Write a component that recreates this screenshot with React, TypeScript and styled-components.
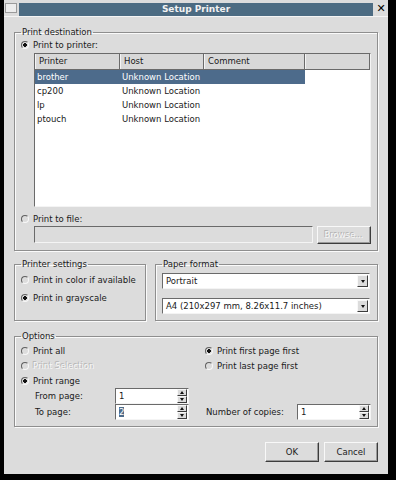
import React from "react";
import styled, { createGlobalStyle } from "styled-components";

const GlobalStyle = createGlobalStyle`
  body {
    margin: 0;
    background: #000;
    font-family: "DejaVu Sans", "Liberation Sans", sans-serif;
    font-size: 8.5px;
    color: #1a1a1a;
  }
`;

const Window = styled.div`
  width: 384px;
  height: 474px;
  margin-left: 4px;
  background: #dcdcdc;
  display: flex;
  flex-direction: column;
  box-sizing: border-box;
`;

const TitleBar = styled.div`
  height: 17px;
  display: flex;
  align-items: center;
  padding: 0 1px;
  gap: 2px;
  border-bottom: 1px solid #f4f4f4;
  box-sizing: border-box;
`;

const MenuBox = styled.div`
  width: 10px;
  height: 8px;
  border: 1px solid #9a9a9a;
  background: #ececec;
`;

const TitleText = styled.div`
  flex: 1;
  height: 13px;
  margin-top: 2px;
  background: #4c6b82;
  color: #f2f2f2;
  font-weight: bold;
  font-size: 9px;
  line-height: 13px;
  text-align: center;
`;

const Close = styled.div`
  width: 12px;
  font-weight: bold;
  font-size: 11px;
  color: #000;
  text-align: center;
`;

const Body = styled.div`
  flex: 1;
  padding: 10px 10px 0 10px;
  display: flex;
  flex-direction: column;
`;

const Group = styled.fieldset<{ $mt?: number }>`
  margin: ${({ $mt }) => $mt ?? 0}px 0 0 0;
  padding: 0 6px 6px 6px;
  border: 1px solid #8e8e8e;
  box-shadow: 1px 1px 0 #fafafa, inset 1px 1px 0 #fafafa;
  min-width: 0;
`;

const Legend = styled.legend`
  padding: 0 1px;
  margin-left: 0;
  line-height: 11px;
  color: #1a1a1a;
`;

const RadioRow = styled.label<{ $disabled?: boolean; $mt?: number }>`
  display: flex;
  align-items: center;
  gap: 4px;
  height: 14px;
  white-space: nowrap;
  margin-top: ${({ $mt }) => $mt ?? 0}px;
  color: ${({ $disabled }) => ($disabled ? "#f6f6f6" : "#1a1a1a")};
  text-shadow: ${({ $disabled }) => ($disabled ? "-1px -1px 0 #b4b4b4" : "none")};
`;

const RadioDot = styled.span<{ $checked?: boolean }>`
  width: 8px;
  height: 8px;
  flex: none;
  box-sizing: border-box;
  border-radius: 50%;
  border: 1px solid;
  border-color: #606060 #f8f8f8 #f8f8f8 #606060;
  background: ${({ $checked }) =>
    $checked ? "radial-gradient(circle, #111 0 1.6px, #dcdcdc 2px)" : "#dcdcdc"};
`;

const Radio: React.FC<{ checked?: boolean; disabled?: boolean; mt?: number; children: React.ReactNode }> = ({
  checked,
  disabled,
  mt,
  children,
}) => (
  <RadioRow $disabled={disabled} $mt={mt}>
    <RadioDot $checked={checked} />
    {children}
  </RadioRow>
);

const List = styled.div`
  margin: 1px 0 0 13px;
  height: 154px;
  background: #fff;
  border: 1px solid;
  border-color: #6a6a6a #f4f4f4 #f4f4f4 #6a6a6a;
  box-sizing: border-box;
`;

const HeaderRow = styled.div`
  display: grid;
  grid-template-columns: 85px 84px 101px 1fr;
  height: 16px;
  background: #d8d8d8;
  border-bottom: 1px solid #6a6a6a;
  box-sizing: border-box;
`;

const HeaderCell = styled.div`
  padding-left: 3px;
  line-height: 15px;
  border-left: 1px solid #f4f4f4;
  border-right: 1px solid #6a6a6a;
`;

const Row = styled.div<{ $selected?: boolean }>`
  display: grid;
  grid-template-columns: 85px 84px 101px;
  height: 14px;
  line-height: 14px;
  width: 270px;
  background: ${({ $selected }) => ($selected ? "#4d6b8b" : "transparent")};
  color: ${({ $selected }) => ($selected ? "#fff" : "#1a1a1a")};
`;

const Cell = styled.div`
  padding-left: 2px;
  white-space: nowrap;
`;

const FileRow = styled.div`
  display: flex;
  gap: 4px;
  margin: 0 0 0 13px;
`;

const FileField = styled.div`
  flex: 1;
  height: 17px;
  background: #dcdcdc;
  border: 1px solid;
  border-color: #6a6a6a #f4f4f4 #f4f4f4 #6a6a6a;
  box-sizing: border-box;
`;

const Button = styled.div<{ $disabled?: boolean; $w: number }>`
  width: ${({ $w }) => $w}px;
  height: ${({ $disabled }) => ($disabled ? 18 : 20)}px;
  box-sizing: border-box;
  border: 1px solid;
  border-color: #f8f8f8 #3c3c3c #3c3c3c #f8f8f8;
  box-shadow: inset -1px -1px 0 #9a9a9a;
  display: flex;
  align-items: center;
  justify-content: center;
  color: ${({ $disabled }) => ($disabled ? "#f6f6f6" : "#1a1a1a")};
  text-shadow: ${({ $disabled }) => ($disabled ? "-1px -1px 0 #b0b0b0" : "none")};
`;

const MidRow = styled.div`
  display: grid;
  grid-template-columns: 132px 1fr;
  gap: 9px;
  margin-top: 8px;
`;

const Combo = styled.div<{ $mt?: number }>`
  display: flex;
  height: 16px;
  margin: ${({ $mt }) => $mt ?? 0}px 1px 0 0;
  background: #fff;
  border: 1px solid;
  border-color: #6a6a6a #f4f4f4 #f4f4f4 #6a6a6a;
  box-sizing: border-box;
`;

const ComboText = styled.div`
  flex: 1;
  padding-left: 3px;
  line-height: 14px;
  white-space: nowrap;
`;

const ArrowBtn = styled.div`
  width: 11px;
  height: 12px;
  margin: 1px 1px 0 0;
  box-sizing: border-box;
  background: #dcdcdc;
  border: 1px solid;
  border-color: #f8f8f8 #3c3c3c #3c3c3c #f8f8f8;
  display: flex;
  align-items: center;
  justify-content: center;
`;

const Down = styled.span`
  width: 0;
  height: 0;
  border-left: 2.5px solid transparent;
  border-right: 2.5px solid transparent;
  border-top: 3px solid #111;
`;

const OptionsGrid = styled.div`
  display: grid;
  grid-template-columns: 184px 1fr;
  grid-auto-rows: auto;
`;

const OptCol = styled.div<{ $spread?: boolean }>`
  display: flex;
  flex-direction: column;
  justify-content: ${({ $spread }) => ($spread ? "space-between" : "flex-start")};
`;

const FieldRow = styled.div<{ $label: number }>`
  display: grid;
  grid-template-columns: ${({ $label }) => $label}px 74px;
  align-items: center;
  height: 16px;
  white-space: nowrap;
  padding-left: ${({ $label }) => ($label === 80 ? 14 : 1)}px;
`;

const Spin = styled.div`
  display: flex;
  height: 16px;
  background: #fff;
  border: 1px solid;
  border-color: #6a6a6a #f4f4f4 #f4f4f4 #6a6a6a;
  box-sizing: border-box;
`;

const SpinText = styled.div`
  flex: 1;
  padding-left: 3px;
  line-height: 14px;
`;

const Selected = styled.span`
  background: #4d6b8b;
  color: #fff;
`;

const SpinBtns = styled.div`
  width: 10px;
  margin-right: 1px;
  display: flex;
  flex-direction: column;
`;

const SpinBtn = styled.div`
  flex: 1;
  background: #dcdcdc;
  border: 1px solid;
  border-color: #f8f8f8 #3c3c3c #3c3c3c #f8f8f8;
  display: flex;
  align-items: center;
  justify-content: center;
`;

const Tri = styled.span<{ $up?: boolean }>`
  width: 0;
  height: 0;
  border-left: 2.5px solid transparent;
  border-right: 2.5px solid transparent;
  ${({ $up }) => ($up ? "border-bottom: 3px solid #111;" : "border-top: 3px solid #111;")}
`;

const SpinBox: React.FC<{ children: React.ReactNode }> = ({ children }) => (
  <Spin>
    <SpinText>{children}</SpinText>
    <SpinBtns>
      <SpinBtn>
        <Tri $up />
      </SpinBtn>
      <SpinBtn>
        <Tri />
      </SpinBtn>
    </SpinBtns>
  </Spin>
);

const Footer = styled.div`
  display: flex;
  justify-content: flex-end;
  gap: 5px;
  margin-top: 15px;
`;

const printers = ["brother", "cp200", "lp", "ptouch"];

export default function App() {
  return (
    <>
      <GlobalStyle />
      <Window>
        <TitleBar>
          <MenuBox />
          <TitleText>Setup Printer</TitleText>
          <Close>✕</Close>
        </TitleBar>
        <Body>
          <Group>
            <Legend>Print destination</Legend>
            <Radio checked>Print to printer:</Radio>
            <List>
              <HeaderRow>
                <HeaderCell>Printer</HeaderCell>
                <HeaderCell>Host</HeaderCell>
                <HeaderCell>Comment</HeaderCell>
                <HeaderCell />
              </HeaderRow>
              {printers.map((p, i) => (
                <Row key={p} $selected={i === 0}>
                  <Cell>{p}</Cell>
                  <Cell>Unknown Location</Cell>
                  <Cell />
                </Row>
              ))}
            </List>
            <Radio mt={5}>Print to file:</Radio>
            <FileRow>
              <FileField />
              <Button $disabled $w={54}>Browse...</Button>
            </FileRow>
          </Group>

          <MidRow>
            <Group>
              <Legend>Printer settings</Legend>
              <Radio mt={3}>Print in color if available</Radio>
              <Radio checked mt={4}>Print in grayscale</Radio>
            </Group>
            <Group>
              <Legend>Paper format</Legend>
              <Combo $mt={3}>
                <ComboText>Portrait</ComboText>
                <ArrowBtn>
                  <Down />
                </ArrowBtn>
              </Combo>
              <Combo $mt={9}>
                <ComboText>A4 (210x297 mm, 8.26x11.7 inches)</ComboText>
                <ArrowBtn>
                  <Down />
                </ArrowBtn>
              </Combo>
            </Group>
          </MidRow>

          <Group $mt={10}>
            <Legend>Options</Legend>
            <OptionsGrid>
              <OptCol>
                <Radio mt={2}>Print all</Radio>
                <Radio disabled mt={1}>Print Selection</Radio>
                <Radio checked mt={1}>Print range</Radio>
                <FieldRow $label={80}>
                  <span>From page:</span>
                  <SpinBox>1</SpinBox>
                </FieldRow>
                <FieldRow $label={80}>
                  <span>To page:</span>
                  <SpinBox>
                    <Selected>2</Selected>
                  </SpinBox>
                </FieldRow>
              </OptCol>
              <OptCol $spread>
                <div>
                  <Radio checked mt={2}>Print first page first</Radio>
                  <Radio mt={1}>Print last page first</Radio>
                </div>
                <FieldRow $label={91}>
                  <span>Number of copies:</span>
                  <SpinBox>1</SpinBox>
                </FieldRow>
              </OptCol>
            </OptionsGrid>
          </Group>

          <Footer>
            <Button $w={54}>OK</Button>
            <Button $w={54}>Cancel</Button>
          </Footer>
        </Body>
      </Window>
    </>
  );
}
